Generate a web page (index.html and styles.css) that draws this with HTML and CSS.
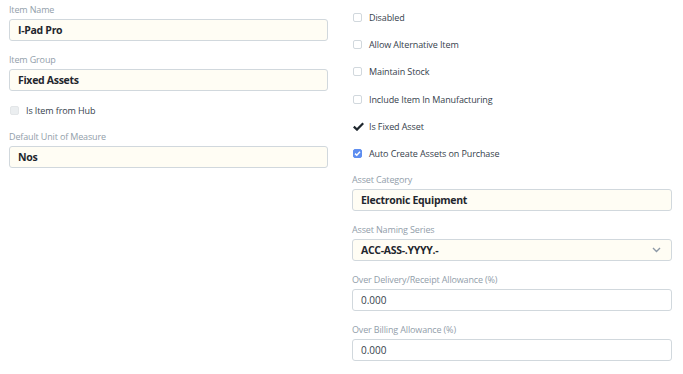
FILE: index.html
```html
<!DOCTYPE html>
<html lang="en">
<head>
    <meta charset="UTF-8">
    <meta name="viewport" content="width=device-width, initial-scale=1.0">
    <title>Item</title>
    <link rel="stylesheet" href="styles.css">
</head>
<body>
    <div class="form-layout">
        <div class="column">
            <div class="field">
                <label class="field-label">Item Name</label>
                <div class="control filled">I-Pad Pro</div>
            </div>
            <div class="field">
                <label class="field-label">Item Group</label>
                <div class="control filled">Fixed Assets</div>
            </div>
            <div class="check-row disabled">
                <span class="box"></span>
                <span class="check-text">Is Item from Hub</span>
            </div>
            <div class="field">
                <label class="field-label">Default Unit of Measure</label>
                <div class="control filled">Nos</div>
            </div>
        </div>

        <div class="column right">
            <div class="check-row">
                <span class="box"></span>
                <span class="check-text">Disabled</span>
            </div>
            <div class="check-row">
                <span class="box"></span>
                <span class="check-text">Allow Alternative Item</span>
            </div>
            <div class="check-row">
                <span class="box"></span>
                <span class="check-text">Maintain Stock</span>
            </div>
            <div class="check-row">
                <span class="box"></span>
                <span class="check-text">Include Item In Manufacturing</span>
            </div>
            <div class="check-row">
                <svg class="tick" width="11" height="9" viewBox="0 0 11 9">
                    <path d="M0.8 4.6 L4 7.6 L10.2 1.2" fill="none" stroke="#1f272e" stroke-width="2.2"/>
                </svg>
                <span class="check-text">Is Fixed Asset</span>
            </div>
            <div class="check-row">
                <span class="box checked">
                    <svg width="9" height="9" viewBox="0 0 9 9">
                        <path d="M2 4.6 L3.8 6.3 L7 2.8" fill="none" stroke="#fff" stroke-width="1.5"/>
                    </svg>
                </span>
                <span class="check-text">Auto Create Assets on Purchase</span>
            </div>
            <div class="field">
                <label class="field-label">Asset Category</label>
                <div class="control filled">Electronic Equipment</div>
            </div>
            <div class="field">
                <label class="field-label">Asset Naming Series</label>
                <div class="control filled select">
                    <span>ACC-ASS-.YYYY.-</span>
                    <svg width="9" height="6" viewBox="0 0 9 6">
                        <path d="M1 1 L4.5 4.5 L8 1" fill="none" stroke="#8d99a6" stroke-width="1.4"/>
                    </svg>
                </div>
            </div>
            <div class="field">
                <label class="field-label">Over Delivery/Receipt Allowance (%)</label>
                <div class="control">0.000</div>
            </div>
            <div class="field">
                <label class="field-label">Over Billing Allowance (%)</label>
                <div class="control">0.000</div>
            </div>
        </div>
    </div>
</body>
</html>
```

FILE: styles.css
```css
* {
    margin: 0;
    padding: 0;
    box-sizing: border-box;
}

body {
    font-family: 'Open Sans', sans-serif;
    background: #ffffff;
    color: #36414c;
}

.form-layout {
    display: grid;
    grid-template-columns: 319px 320px;
    column-gap: 24px;
    padding: 3px 11px 0 9px;
}

.column {
    display: flex;
    flex-direction: column;
}

.column.right {
    padding-top: 7px;
}

.field {
    margin-bottom: 12px;
}

.field-label {
    display: block;
    font-size: 9px;
    line-height: 14px;
    color: #929eaa;
    margin-bottom: 2px;
    letter-spacing: -0.15px;
}

.control {
    height: 22px;
    border: 1px solid #d1d8dd;
    border-radius: 3px;
    background: #ffffff;
    padding: 0 8px;
    display: flex;
    align-items: center;
    font-size: 10px;
    color: #36414c;
}

.control.filled {
    background: #fffdf4;
    font-weight: 700;
    font-size: 10.5px;
    color: #1f272e;
    letter-spacing: -0.3px;
}

.control.select {
    justify-content: space-between;
}

.control.select svg {
    margin-right: 2px;
}

.check-row {
    display: flex;
    align-items: center;
    height: 15px;
    margin-bottom: 12.2px;
    padding-left: 1px;
}

.box {
    width: 9px;
    height: 9px;
    border: 1px solid #d1d8dd;
    border-radius: 2px;
    background: #ffffff;
    margin-right: 7px;
    display: flex;
    align-items: center;
    justify-content: center;
}

.box.checked {
    background: #5e8ef0;
    border-color: #5e8ef0;
}

.box.checked svg {
    flex: none;
}

.check-row.disabled .box {
    background: #ebeef0;
    border-color: #e3e6e8;
}

.tick {
    margin-right: 5px;
    flex: none;
}

.check-text {
    font-size: 9px;
    color: #36414c;
    letter-spacing: -0.1px;
}
```
